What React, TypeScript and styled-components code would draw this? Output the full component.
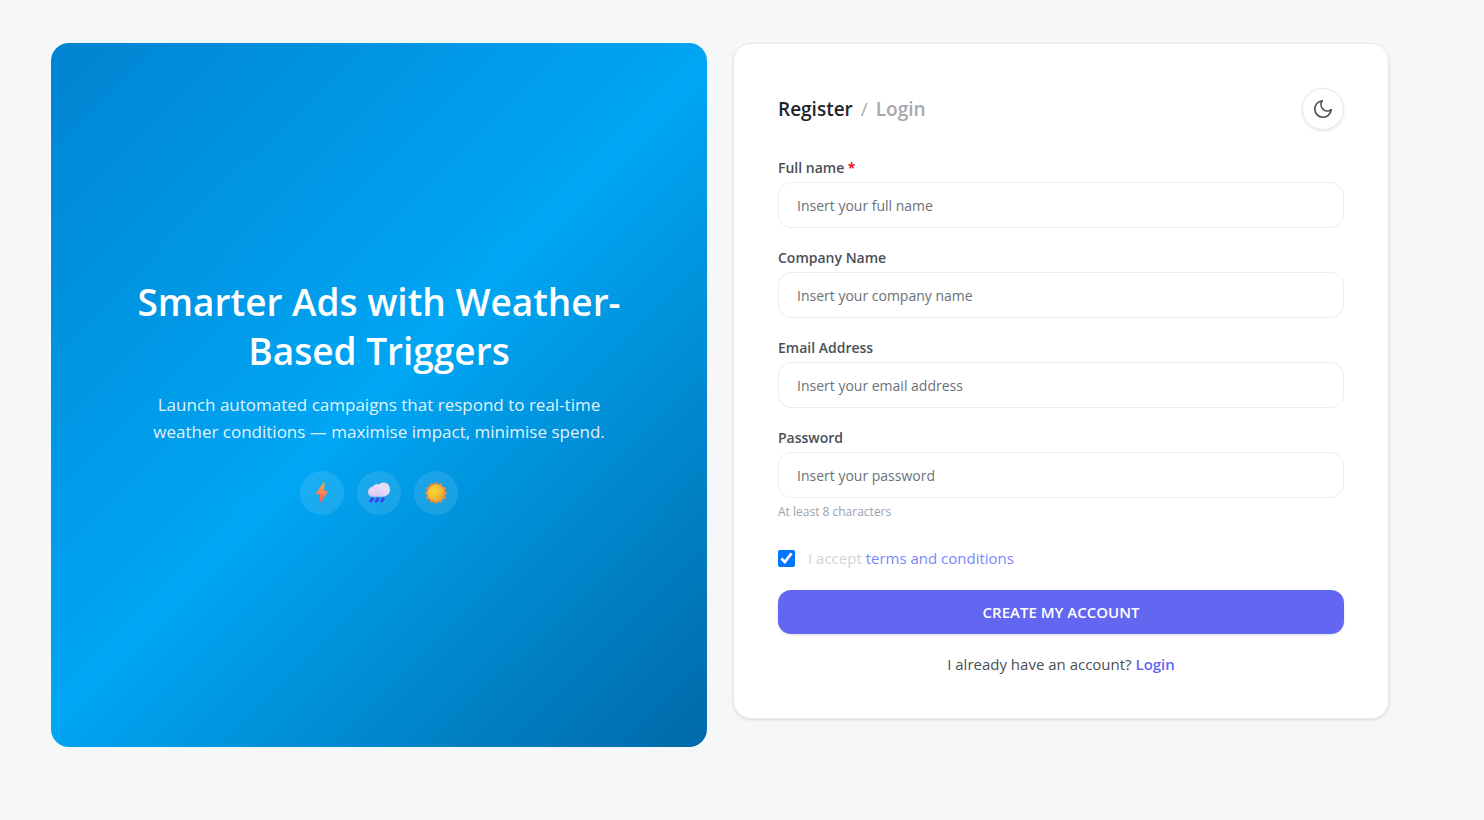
import React from "react";
import styled, { createGlobalStyle } from "styled-components";

const GlobalStyle = createGlobalStyle`
  *, *::before, *::after { box-sizing: border-box; }
  body {
    margin: 0;
    background: #f6f7f9;
    color: #495057;
    font-family: "Segoe UI", "Open Sans", "Noto Sans", sans-serif;
    font-size: 14px;
    line-height: 20px;
  }
  h1, h2, p { margin: 0; }
  a { color: inherit; text-decoration: none; }
  button, input { font: inherit; }
`;

const Page = styled.main`
  display: grid;
  grid-template-columns: 1fr 1fr;
  align-items: start;
  gap: 26px;
  min-height: 100vh;
  padding: 43px 95px 43px 51px;
`;

const Hero = styled.section`
  display: flex;
  flex-direction: column;
  align-items: center;
  justify-content: center;
  min-height: calc(100vh - 116px);
  padding: 46px 80px 44px;
  border-radius: 18px;
  background: linear-gradient(135deg in oklab, #0084d1, #00a6f4 50%, #0069a8);
  color: #fff;
  text-align: center;
`;

const HeroTitle = styled.h1`
  font-size: 37px;
  line-height: 49px;
  font-weight: 600;
`;

const HeroText = styled.p`
  max-width: 460px;
  margin-top: 16px;
  color: rgba(255, 255, 255, 0.9);
  font-size: 17px;
  line-height: 27px;
`;

const Badges = styled.div`
  display: flex;
  gap: 13px;
  margin-top: 26px;
`;

const Badge = styled.span`
  display: flex;
  align-items: center;
  justify-content: center;
  width: 44px;
  height: 44px;
  border-radius: 50%;
  background: rgba(255, 255, 255, 0.1);
`;

const Card = styled.section`
  padding: 44px;
  border: 1px solid #e9eaec;
  border-radius: 18px;
  background: #fff;
  box-shadow: 0 1px 3px rgba(0, 0, 0, 0.12);
`;

const CardHeader = styled.header`
  display: flex;
  align-items: center;
  justify-content: space-between;
`;

const Tabs = styled.nav`
  display: flex;
  gap: 8px;
  color: #a6a8ab;
  font-size: 19px;
  line-height: 28px;
`;

const Tab = styled.a<{ $active?: boolean }>`
  color: ${(p) => (p.$active ? "#212529" : "#a6a8ab")};
  font-weight: 600;
`;

const ThemeButton = styled.button`
  display: flex;
  align-items: center;
  justify-content: center;
  width: 42px;
  height: 42px;
  padding: 0;
  border: 1px solid #e9eaec;
  border-radius: 50%;
  background: #fff;
  color: #495057;
  box-shadow: 0 1px 3px rgba(0, 0, 0, 0.12);
  cursor: pointer;
`;

const Form = styled.form`
  display: flex;
  flex-direction: column;
  gap: 20px;
  margin-top: 28px;
`;

const Field = styled.div`
  display: flex;
  flex-direction: column;
`;

const Label = styled.label`
  margin-bottom: 4px;
  color: #495057;
  font-weight: 600;
`;

const Required = styled.span`
  color: #e7000b;
`;

const TextInput = styled.input`
  width: 100%;
  height: 46px;
  padding: 0 18px;
  border: 1px solid #ebecee;
  border-radius: 13px;
  background: #fff;
  color: #212529;

  &::placeholder {
    color: #6b7178;
    opacity: 1;
  }
`;

const Hint = styled.p`
  margin-top: 4px;
  color: #99a1af;
  font-size: 12px;
`;

const Terms = styled.div`
  display: flex;
  align-items: center;
  gap: 13px;
  margin-top: 6px;
  padding-bottom: 2px;
  color: #d1d5dc;
  font-size: 15px;
`;

const Checkbox = styled.input`
  width: 17px;
  height: 17px;
  margin: 0;
`;

const TermsLink = styled.a`
  color: #7c86ff;
`;

const SubmitButton = styled.button`
  height: 44px;
  border: 0;
  border-radius: 13px;
  background: #6366f1;
  color: #fff;
  font-size: 15px;
  font-weight: 600;
  text-transform: uppercase;
  box-shadow: 0 1px 3px rgba(0, 0, 0, 0.12);
  cursor: pointer;
`;

const Footnote = styled.p`
  font-size: 15px;
  text-align: center;
`;

const LoginLink = styled.a`
  color: #6366f1;
  font-weight: 600;
`;

const BoltIcon = () => (
  <svg width="22" height="22" viewBox="0 0 22 22" aria-hidden="true">
    <defs>
      <linearGradient id="bolt" x1="0" y1="0" x2="0" y2="1">
        <stop offset="0" stopColor="#ffa630" />
        <stop offset="0.5" stopColor="#ff8150" />
        <stop offset="1" stopColor="#ff5050" />
      </linearGradient>
    </defs>
    <path
      d="M12.4.7 4.9 11.4c-.3.5-.1.9.5.9h3.8L8 20.8c-.1.8.5 1 .9.4l7.9-11.4c.3-.5.1-.9-.5-.9h-3.2l.5-7.6c0-.9-.7-1.2-1.2-.6Z"
      fill="url(#bolt)"
    />
  </svg>
);

const RainIcon = () => (
  <svg width="24" height="22" viewBox="0 0 24 22" aria-hidden="true">
    <defs>
      <linearGradient id="cloud" x1="1" y1="0" x2="0.2" y2="1">
        <stop offset="0" stopColor="#dcdae8" />
        <stop offset="0.45" stopColor="#e9dcfa" />
        <stop offset="1" stopColor="#cfc1ee" />
      </linearGradient>
      <radialGradient id="puff" cx="0.4" cy="0.35" r="0.7">
        <stop offset="0" stopColor="#eee7fa" />
        <stop offset="1" stopColor="#d5c5f3" />
      </radialGradient>
    </defs>
    <path
      d="M5.4 14.7C2.7 14.7 1 12.9 1 10.2 1 7.4 3 4.800 5.900 4.500c1-1.600 2.400-2.200 4-2.200.8 0 1.500.1 2.100.3C13.100 1.200 14.900.5 16.900.5 20.500.5 23 3.500 23 7.300c0 4.200-2.900 7.400-7 7.400Z"
      fill="url(#cloud)"
    />
    <circle cx="6.200" cy="9.8" r="4.4" fill="url(#puff)" opacity="0.5" />
    <path
      d="m5.3 16.800-1.600 2.400M10.800 16.800l-1.600 2.400M16.300 16.800l-1.600 2.400"
      stroke="#4040f5"
      strokeWidth="3"
      strokeLinecap="round"
    />
  </svg>
);

const rays = Array.from({ length: 12 }, (_, i) => {
  const angle = (i * Math.PI) / 6;
  return { x: 11 + 8.8 * Math.sin(angle), y: 11 - 8.8 * Math.cos(angle) };
});

const SunIcon = () => (
  <svg width="22" height="22" viewBox="0 0 22 22" aria-hidden="true">
    <defs>
      <radialGradient id="sun" cx="0.35" cy="0.4" r="0.7">
        <stop offset="0" stopColor="#f9d338" />
        <stop offset="0.6" stopColor="#f3bb33" />
        <stop offset="1" stopColor="#e89a32" />
      </radialGradient>
    </defs>
    <circle cx="11" cy="11" r="9" fill="#f28a3a" />
    {rays.map((ray, i) => (
      <circle key={i} cx={ray.x} cy={ray.y} r="1.9" fill="#f28a3a" />
    ))}
    <circle cx="11" cy="11" r="8.4" fill="url(#sun)" />
  </svg>
);

const MoonIcon = () => (
  <svg
    width="22"
    height="22"
    viewBox="0 0 24 24"
    fill="none"
    stroke="currentColor"
    strokeWidth="1.8"
    strokeLinecap="round"
    strokeLinejoin="round"
    aria-hidden="true"
  >
    <path d="M21 12.79A9 9 0 1 1 11.21 3 7 7 0 0 0 21 12.79Z" />
  </svg>
);

const fields = [
  { id: "name", label: "Full name", type: "text", placeholder: "Insert your full name", required: true },
  { id: "company", label: "Company Name", type: "text", placeholder: "Insert your company name" },
  { id: "email", label: "Email Address", type: "email", placeholder: "Insert your email address" },
  {
    id: "password",
    label: "Password",
    type: "password",
    placeholder: "Insert your password",
    hint: "At least 8 characters",
  },
];

export default function App() {
  return (
    <>
      <GlobalStyle />
      <Page>
        <Hero>
          <HeroTitle>Smarter Ads with Weather-Based Triggers</HeroTitle>
          <HeroText>
            Launch automated campaigns that respond to real-time weather conditions — maximise impact, minimise spend.
          </HeroText>
          <Badges>
            <Badge><BoltIcon /></Badge>
            <Badge><RainIcon /></Badge>
            <Badge><SunIcon /></Badge>
          </Badges>
        </Hero>
        <Card>
          <CardHeader>
            <Tabs>
              <Tab href="#register" $active>Register</Tab>
              <span>/</span>
              <Tab href="#login">Login</Tab>
            </Tabs>
            <ThemeButton type="button" aria-label="Switch to dark theme">
              <MoonIcon />
            </ThemeButton>
          </CardHeader>
          <Form onSubmit={(event) => event.preventDefault()}>
            {fields.map((field) => (
              <Field key={field.id}>
                <Label htmlFor={field.id}>
                  {field.label}
                  {field.required && <Required> *</Required>}
                </Label>
                <TextInput id={field.id} type={field.type} placeholder={field.placeholder} />
                {field.hint && <Hint>{field.hint}</Hint>}
              </Field>
            ))}
            <Terms>
              <Checkbox id="terms" type="checkbox" defaultChecked />
              <label htmlFor="terms">
                I accept <TermsLink href="#terms">terms and conditions</TermsLink>
              </label>
            </Terms>
            <SubmitButton type="submit">Create my account</SubmitButton>
            <Footnote>
              I already have an account? <LoginLink href="#login">Login</LoginLink>
            </Footnote>
          </Form>
        </Card>
      </Page>
    </>
  );
}
